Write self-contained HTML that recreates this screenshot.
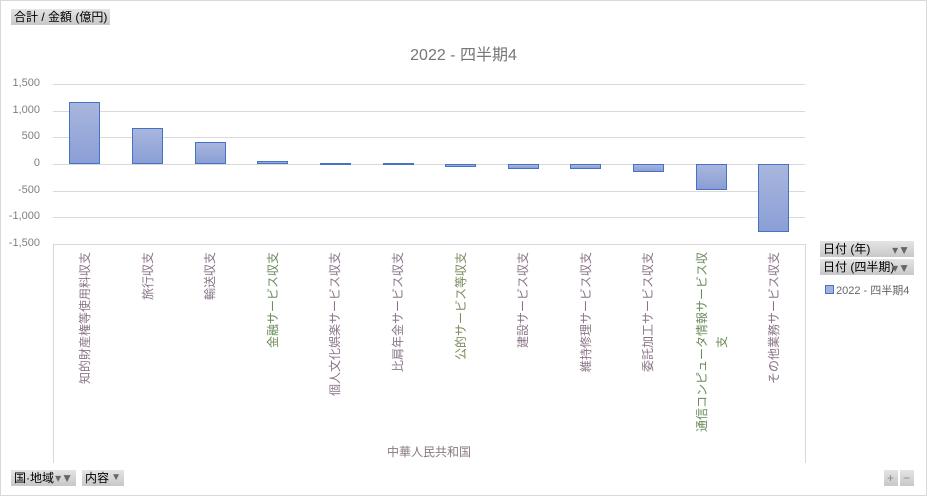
<!DOCTYPE html>
<html><head><meta charset="utf-8"><style>
body{margin:0;width:927px;height:496px;background:#fff;font-family:"Liberation Sans","Noto Sans CJK JP",sans-serif;position:relative;overflow:hidden}
.frame{position:absolute;left:0;top:0;width:925px;height:494px;border:1px solid #d9d9d9}
.btn{position:absolute;background:linear-gradient(#e4e4e4,#c8c8c8);font-size:12px;color:#000;line-height:16px;height:16px;padding:0 3px;white-space:nowrap}
.yl{position:absolute;font-size:11px;color:#7f7f7f;text-align:right;width:40px;left:0}
.g{position:absolute;left:53px;width:752px;height:1px;background:#d9d9d9}
.bar{position:absolute;width:31px;background:linear-gradient(#a9b6dd,#8a9fd6);border:1px solid #4472c4;box-sizing:border-box}
.lab{position:absolute;top:252px;writing-mode:vertical-rl;text-orientation:sideways;font-size:12px;color:#8a7488;line-height:14px;transform:translateX(-50%) rotate(180deg)}
</style></head><body>
<div class="frame"></div>
<div class="btn" style="left:11px;top:9px">合計 / 金額 (億円)</div>
<div style="position:absolute;left:0;width:927px;top:41px;text-align:center;font-size:16px;color:#777">2022 - 四半期4</div>
<div class="yl" style="top:77px">1,500</div>
<div class="yl" style="top:104px">1,000</div>
<div class="yl" style="top:130px">500</div>
<div class="yl" style="top:157px">0</div>
<div class="yl" style="top:184px">-500</div>
<div class="yl" style="top:210px">-1,000</div>
<div class="yl" style="top:237px">-1,500</div>
<div class="g" style="top:84px"></div><div class="g" style="top:111px"></div><div class="g" style="top:137px"></div><div class="g" style="top:164px"></div><div class="g" style="top:191px"></div><div class="g" style="top:217px"></div>
<div style="position:absolute;left:53px;top:244px;width:751px;height:218px;border:1px solid #d9d9d9;border-bottom:none"></div>
<div class="bar" style="left:69px;top:102px;height:62px"></div>
<div class="bar" style="left:132px;top:128px;height:36px"></div>
<div class="bar" style="left:195px;top:142px;height:22px"></div>
<div class="bar" style="left:257px;top:161px;height:3px"></div>
<div class="bar" style="left:320px;top:163px;height:2px"></div>
<div class="bar" style="left:383px;top:163px;height:2px"></div>
<div class="bar" style="left:445px;top:164px;height:3px"></div>
<div class="bar" style="left:508px;top:164px;height:5px"></div>
<div class="bar" style="left:570px;top:164px;height:5px"></div>
<div class="bar" style="left:633px;top:164px;height:8px"></div>
<div class="bar" style="left:696px;top:164px;height:26px"></div>
<div class="bar" style="left:758px;top:164px;height:68px"></div>
<div class="lab" style="left:85px">知的財産権等使用料収支</div>
<div class="lab" style="left:148px">旅行収支</div>
<div class="lab" style="left:210px">輸送収支</div>
<div class="lab" style="left:273px;color:#6a8a5a">金融サービス収支</div>
<div class="lab" style="left:335px">個人文化娯楽サービス収支</div>
<div class="lab" style="left:398px">比肩年金サービス収支</div>
<div class="lab" style="left:461px;color:#7a8a5a">公的サービス等収支</div>
<div class="lab" style="left:523px">建設サービス収支</div>
<div class="lab" style="left:586px">維持修理サービス収支</div>
<div class="lab" style="left:648px">委託加工サービス収支</div>
<div class="lab" style="left:712px;height:180px;color:#6a8a5a;line-height:20px;text-align:center">通信コンピュータ情報サービス収支</div>
<div class="lab" style="left:774px">その他業務サービス収支</div>
<div style="position:absolute;left:53px;width:752px;top:443px;text-align:center;font-size:12px;color:#8a7a7a">中華人民共和国</div>
<div class="btn" style="left:820px;top:241px;width:88px">日付 (年)<span style="position:absolute;right:4px;top:1px;color:#666">▾▼</span></div>
<div class="btn" style="left:820px;top:259px;width:88px">日付 (四半期)<span style="position:absolute;right:4px;top:1px;color:#666">▾▼</span></div>
<div style="position:absolute;left:825px;top:282px;font-size:11px;color:#666"><span style="display:inline-block;width:7px;height:7px;background:#a3b2dc;border:1px solid #4472c4;margin-right:2px"></span>2022 - 四半期4</div>
<div class="btn" style="left:11px;top:470px;width:59px;padding-right:3px">国·地域<span style="position:absolute;right:3px;color:#666">▾▼</span></div>
<div class="btn" style="left:82px;top:470px;width:36px">内容<span style="position:absolute;right:3px;color:#666;font-size:10px">▼</span></div>
<div class="btn" style="left:884px;top:470px;width:8px;color:#888">+</div>
<div class="btn" style="left:900px;top:470px;width:8px;color:#888">−</div>
</body></html>
